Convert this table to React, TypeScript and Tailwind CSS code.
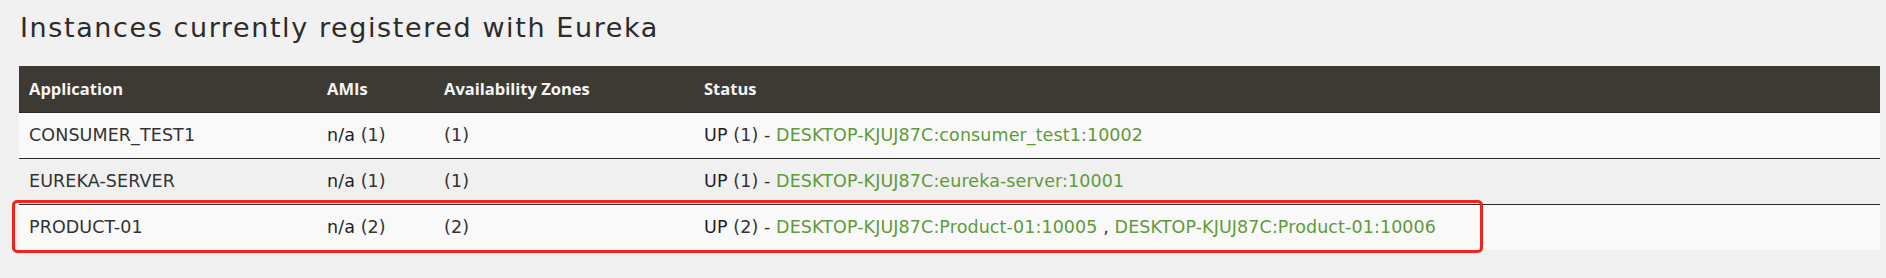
import React from "react";

const body = { fontFamily: '"DejaVu Sans", "Open Sans", sans-serif' };
const head = { fontFamily: '"Open Sans", "Liberation Sans", sans-serif' };

type Row = { app: string; ami: string; zones: string; up: string; links: string[]; bg: string };

const rows: Row[] = [
  { app: "CONSUMER_TEST1", ami: "(1)", zones: "(1)", up: "(1)", links: ["DESKTOP-KJUJ87C:consumer_test1:10002"], bg: "bg-[#f9f9f9]" },
  { app: "EUREKA-SERVER", ami: "(1)", zones: "(1)", up: "(1)", links: ["DESKTOP-KJUJ87C:eureka-server:10001"], bg: "bg-[#f0f0f0]" },
  { app: "PRODUCT-01", ami: "(2)", zones: "(2)", up: "(2)", links: ["DESKTOP-KJUJ87C:Product-01:10005", "DESKTOP-KJUJ87C:Product-01:10006"], bg: "bg-[#f9f9f9]" },
];

export default function App() {
  return (
    <div className="relative w-[1886px] h-[278px] bg-[#f1f1f1] overflow-hidden" style={body}>
      <div className="pl-[19px]">
        <h1 className="h-[66px] pt-[14px] pl-[1px] text-[27px] leading-[27px] tracking-[1.6px] text-[#2b2b2b] font-normal">
          Instances currently registered with Eureka
        </h1>
        <div className="w-[1861px]">
          <div className="flex h-[46px] items-center bg-[#3d3a34] text-[#f5f5f5] text-[16.5px] font-bold" style={head}>
            <div className="w-[298px] pl-[10px]">Application</div>
            <div className="w-[117px] pl-[10px]">AMIs</div>
            <div className="w-[260px] pl-[10px]">Availability Zones</div>
            <div className="flex-1 pl-[10px]">Status</div>
          </div>
          {rows.map((r) => (
            <div
              key={r.app}
              className={`flex h-[46px] items-center border-t border-[#2e2c2a] ${r.bg} text-[17.5px] tracking-[0.1px] text-[#333333]`}
            >
              <div className="w-[298px] pl-[10px]">{r.app}</div>
              <div className="w-[117px] pl-[10px]">
                <span className="text-[#1f1f1f]">n/a</span> {r.ami}
              </div>
              <div className="w-[260px] pl-[10px]">{r.zones}</div>
              <div className="flex-1 pl-[10px]">
                <span className="text-[#1f1f1f]">UP</span> {r.up} -{" "}
                {r.links.map((l, i) => (
                  <React.Fragment key={l}>
                    {i > 0 && " , "}
                    <span className="text-[#5f9a3a]">{l}</span>
                  </React.Fragment>
                ))}
              </div>
            </div>
          ))}
        </div>
      </div>
      <div className="absolute left-[12px] top-[200px] w-[1471px] h-[53px] border-[3px] border-[#f0241c] rounded-[5px]" />
    </div>
  );
}
